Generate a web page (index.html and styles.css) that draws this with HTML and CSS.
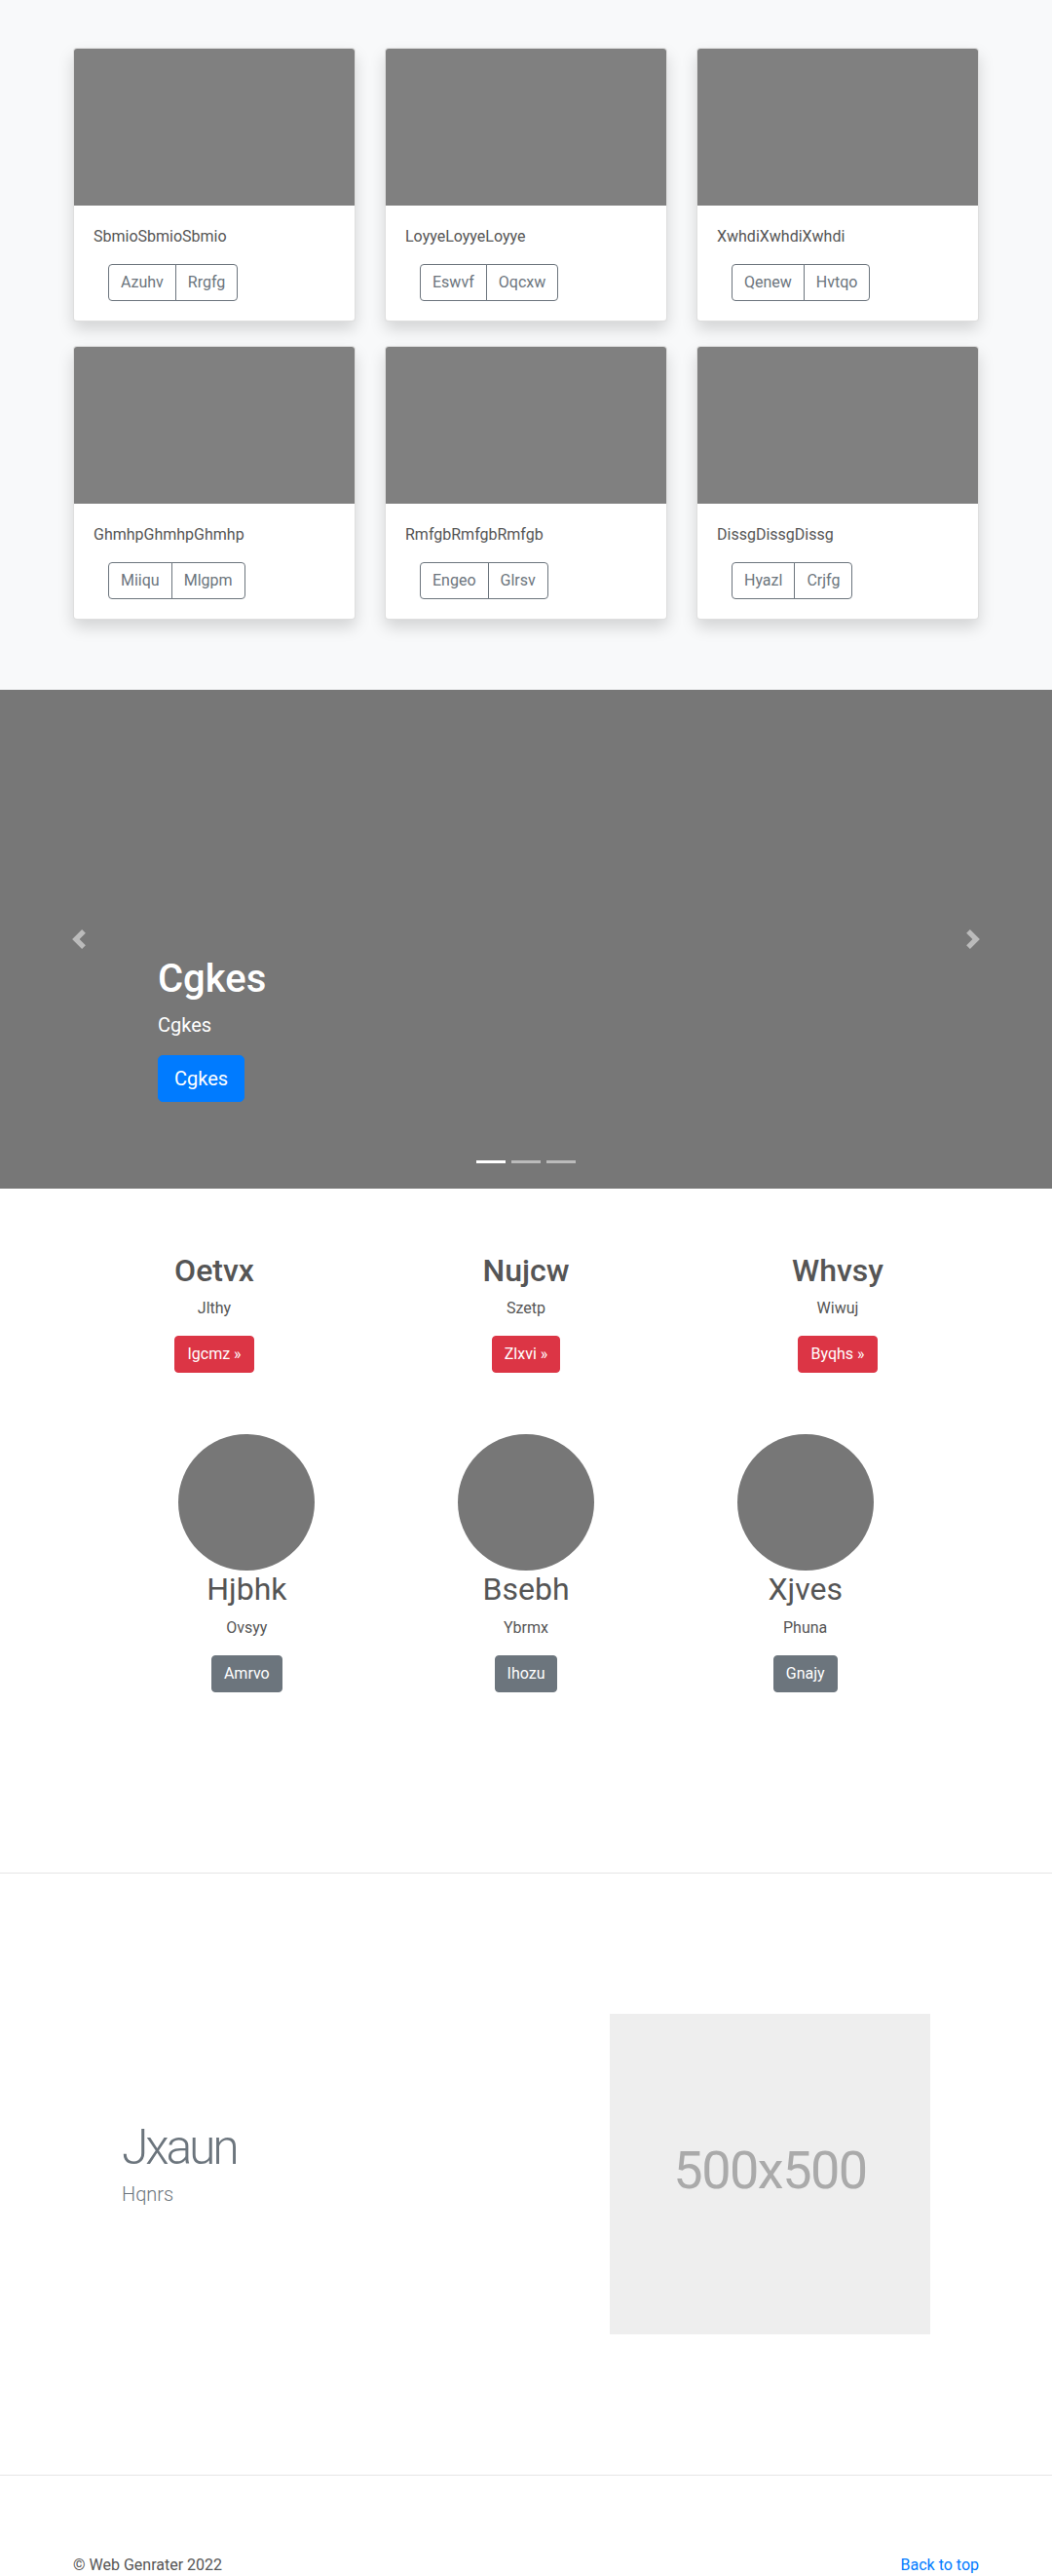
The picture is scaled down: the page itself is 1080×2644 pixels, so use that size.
FILE: index.html
```html
<!DOCTYPE html>
<html lang="en">
<head>
<meta charset="utf-8">
<title>Album</title>
<link rel="stylesheet" href="styles.css">
</head>
<body>
<main>
  <section class="album">
    <div class="container">
      <div class="card-grid">
        <div class="card">
          <div class="card-img"></div>
          <div class="card-body">
            <p class="card-text">SbmioSbmioSbmio</p>
            <div class="btn-group"><a class="btn btn-outline" href="#">Azuhv</a><a class="btn btn-outline" href="#">Rrgfg</a></div>
          </div>
        </div>
        <div class="card">
          <div class="card-img"></div>
          <div class="card-body">
            <p class="card-text">LoyyeLoyyeLoyye</p>
            <div class="btn-group"><a class="btn btn-outline" href="#">Eswvf</a><a class="btn btn-outline" href="#">Oqcxw</a></div>
          </div>
        </div>
        <div class="card">
          <div class="card-img"></div>
          <div class="card-body">
            <p class="card-text">XwhdiXwhdiXwhdi</p>
            <div class="btn-group"><a class="btn btn-outline" href="#">Qenew</a><a class="btn btn-outline" href="#">Hvtqo</a></div>
          </div>
        </div>
        <div class="card">
          <div class="card-img"></div>
          <div class="card-body">
            <p class="card-text">GhmhpGhmhpGhmhp</p>
            <div class="btn-group"><a class="btn btn-outline" href="#">Miiqu</a><a class="btn btn-outline" href="#">Mlgpm</a></div>
          </div>
        </div>
        <div class="card">
          <div class="card-img"></div>
          <div class="card-body">
            <p class="card-text">RmfgbRmfgbRmfgb</p>
            <div class="btn-group"><a class="btn btn-outline" href="#">Engeo</a><a class="btn btn-outline" href="#">Glrsv</a></div>
          </div>
        </div>
        <div class="card">
          <div class="card-img"></div>
          <div class="card-body">
            <p class="card-text">DissgDissgDissg</p>
            <div class="btn-group"><a class="btn btn-outline" href="#">Hyazl</a><a class="btn btn-outline" href="#">Crjfg</a></div>
          </div>
        </div>
      </div>
    </div>
  </section>

  <section class="carousel">
    <a class="control prev" href="#" aria-label="Previous">
      <svg viewBox="0 0 8 8" fill="#fff"><path d="M5.25 0l-4 4 4 4 1.5-1.5L4.25 4l2.5-2.5L5.25 0z"/></svg>
    </a>
    <a class="control next" href="#" aria-label="Next">
      <svg viewBox="0 0 8 8" fill="#fff"><path d="M2.75 0l-1.5 1.5L3.75 4l-2.5 2.5L2.75 8l4-4-4-4z"/></svg>
    </a>
    <div class="caption">
      <h1>Cgkes</h1>
      <p class="sub">Cgkes</p>
      <p class="action"><a class="btn btn-lg btn-primary" href="#">Cgkes</a></p>
    </div>
    <div class="indicators"><span class="active"></span><span></span><span></span></div>
  </section>

  <section class="marketing">
    <div class="feature-row">
      <div class="feature">
        <h2>Oetvx</h2>
        <p>Jlthy</p>
        <p class="action"><a class="btn btn-danger" href="#">Igcmz »</a></p>
      </div>
      <div class="feature">
        <h2>Nujcw</h2>
        <p>Szetp</p>
        <p class="action"><a class="btn btn-danger" href="#">Zlxvi »</a></p>
      </div>
      <div class="feature">
        <h2>Whvsy</h2>
        <p>Wiwuj</p>
        <p class="action"><a class="btn btn-danger" href="#">Byqhs »</a></p>
      </div>
    </div>
  </section>

  <section class="team">
    <div class="team-row">
      <div class="member">
        <div class="avatar"></div>
        <h2>Hjbhk</h2>
        <p>Ovsyy</p>
        <p class="action"><a class="btn btn-secondary" href="#">Amrvo</a></p>
      </div>
      <div class="member">
        <div class="avatar"></div>
        <h2>Bsebh</h2>
        <p>Ybrmx</p>
        <p class="action"><a class="btn btn-secondary" href="#">Ihozu</a></p>
      </div>
      <div class="member">
        <div class="avatar"></div>
        <h2>Xjves</h2>
        <p>Phuna</p>
        <p class="action"><a class="btn btn-secondary" href="#">Gnajy</a></p>
      </div>
    </div>
  </section>

  <hr class="divider divider-top">

  <section class="featurette">
    <div class="featurette-text">
      <h2>Jxaun</h2>
      <p class="lead">Hqnrs</p>
    </div>
    <div class="placeholder">500x500</div>
  </section>

  <hr class="divider divider-bottom">
</main>

<footer class="footer">
  <p>© Web Genrater 2022</p>
  <p><a href="#">Back to top</a></p>
</footer>
</body>
</html>
```

FILE: styles.css
```css
* {
  box-sizing: border-box;
}

body {
  margin: 0;
  font-family: Roboto, "Liberation Sans", Arial, sans-serif;
  font-size: 16px;
  line-height: 1.5;
  color: #555;
  background: #fff;
}

h1, h2, p {
  margin: 0;
}

a {
  text-decoration: none;
}

/* ---------- album ---------- */
.album {
  background: #f8f9fa;
  padding: 49px 0 72px;
}

.container {
  width: 960px;
  margin: 0 auto;
  padding: 0 15px;
}

.card-grid {
  display: grid;
  grid-template-columns: repeat(3, 1fr);
  column-gap: 30px;
  row-gap: 25px;
}

.card {
  background: #fff;
  border: 1px solid rgba(0, 0, 0, 0.125);
  border-radius: 4px;
  box-shadow: 0 8px 16px rgba(0, 0, 0, 0.15);
  overflow: hidden;
}

.card-img {
  height: 161px;
  background: #808080;
}

.card-body {
  padding: 20px;
}

.card-text {
  margin-bottom: 16px;
}

.btn-group {
  display: inline-flex;
  margin-left: 15px;
}

.btn {
  display: inline-block;
  font-family: inherit;
  font-size: 16px;
  line-height: 24px;
  padding: 6px 12px;
  border: 1px solid transparent;
  border-radius: 4px;
  white-space: nowrap;
}

.btn-outline {
  color: #6c757d;
  border-color: #6c757d;
}

.btn-group .btn:first-child {
  border-top-right-radius: 0;
  border-bottom-right-radius: 0;
}

.btn-group .btn + .btn {
  margin-left: -1px;
  border-top-left-radius: 0;
  border-bottom-left-radius: 0;
}

/* ---------- carousel ---------- */
.carousel {
  position: relative;
  height: 512px;
  background: #777;
  margin-bottom: 65px;
  overflow: hidden;
}

.control {
  position: absolute;
  top: 0;
  bottom: 0;
  width: 15%;
  display: flex;
  align-items: center;
  justify-content: center;
  opacity: 0.5;
}

.control.prev {
  left: 0;
}

.control.next {
  right: 0;
}

.control svg {
  display: block;
  width: 20px;
  height: 20px;
}

.caption {
  position: absolute;
  left: 15%;
  right: 15%;
  bottom: 53px;
  padding: 20px 0;
  color: #fff;
}

.caption h1 {
  font-size: 40px;
  line-height: 48px;
  font-weight: 500;
  margin-bottom: 8px;
}

.caption .sub {
  font-size: 20px;
  line-height: 30px;
  margin-bottom: 16px;
}

.action {
  display: flex;
  margin-bottom: 16px;
}

.btn-lg {
  font-size: 20px;
  line-height: 30px;
  padding: 8px 16px;
  border-radius: 5px;
}

.btn-primary {
  background: #007bff;
  border-color: #007bff;
  color: #fff;
}

.indicators {
  position: absolute;
  left: 0;
  right: 0;
  bottom: 26px;
  display: flex;
  justify-content: center;
  gap: 6px;
}

.indicators span {
  width: 30px;
  height: 3px;
  background: #fff;
  opacity: 0.5;
}

.indicators span.active {
  opacity: 1;
}

/* ---------- marketing ---------- */
.marketing {
  width: 960px;
  margin: 0 auto;
  padding: 0 15px;
}

.feature-row,
.team-row {
  display: grid;
  grid-template-columns: repeat(3, 1fr);
  column-gap: 30px;
  text-align: center;
}

.feature-row .action,
.team-row .action {
  justify-content: center;
}

.feature h2 {
  font-size: 32px;
  line-height: 38.4px;
  font-weight: 500;
  margin-bottom: 8px;
}

.feature p,
.member p {
  margin-bottom: 16px;
}

.btn-danger {
  background: #dc3545;
  border-color: #dc3545;
  color: #fff;
}

.team {
  width: 860px;
  margin: 47px auto 0;
  padding: 0 15px;
}

.avatar {
  width: 140px;
  height: 140px;
  border-radius: 50%;
  background: #777;
  margin: 0 auto;
}

.member h2 {
  font-size: 32px;
  line-height: 38.4px;
  font-weight: 400;
  margin-bottom: 8px;
}

.btn-secondary {
  background: #6c757d;
  border-color: #6c757d;
  color: #fff;
}

/* ---------- featurette ---------- */
.divider {
  border: 0;
  height: 1px;
  background: #e5e5e5;
  margin: 0;
}

.divider-top {
  margin-top: 169px;
}

.divider-bottom {
  margin-top: 144px;
  margin-bottom: 80px;
}

.featurette {
  width: 860px;
  margin: 144px auto 0;
  padding: 0 15px;
  display: grid;
  grid-template-columns: 1fr 329px;
  column-gap: 30px;
  align-items: center;
}

.featurette-text h2 {
  font-size: 50px;
  line-height: 1;
  font-weight: 300;
  letter-spacing: -3.2px;
  color: #6c757d;
  margin-bottom: 8px;
}

.lead {
  font-size: 20px;
  line-height: 30px;
  font-weight: 300;
  color: #6c757d;
  margin-bottom: 16px;
}

.placeholder {
  height: 329px;
  background: #eee;
  color: #aaa;
  font-size: 54px;
  line-height: 1;
  letter-spacing: -1.5px;
  display: flex;
  align-items: center;
  justify-content: center;
  padding-bottom: 6px;
}

/* ---------- footer ---------- */
.footer {
  width: 960px;
  margin: 0 auto;
  padding: 0 15px;
  display: flex;
  justify-content: space-between;
}

.footer p {
  margin-bottom: 16px;
}

.footer a {
  color: #007bff;
}
```
